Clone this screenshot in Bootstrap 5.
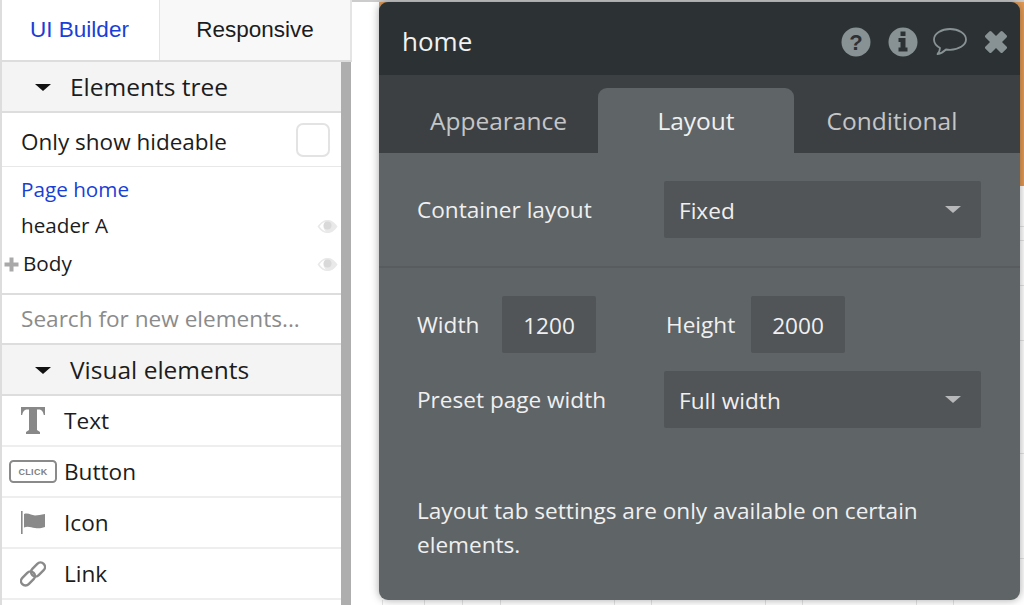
<!DOCTYPE html>
<html lang="en">
<head>
    <meta charset="UTF-8">
    <meta name="viewport" content="width=device-width, initial-scale=1.0">
    <title>Page editor - Layout</title>
    <link href="https://cdn.jsdelivr.net/npm/bootstrap@5.3.0/dist/css/bootstrap.min.css" rel="stylesheet">
    <style>
        html, body { height: 605px; overflow: hidden; }
        body { background: #fff; font-family: "Open Sans", sans-serif; color: #1c1c1c; }

        .shell { height: 605px; }
        .side { width: 352px; flex: none; border-left: 2px solid #ddd; background: #fff; }
        .side-tabs { height: 62px; border-bottom: 2px solid #ddd; font-family: "Liberation Sans", sans-serif; font-size: 22.5px; }
        .side-tab { height: 60px; }
        .side-tab-on { width: 157px; color: #1a3fd6; padding-right: 2px; }
        .side-tab-off { width: 193px; background: #f8f8f8; border-left: 1px solid #e4e4e4; border-right: 2px solid #e4e4e4; }
        .side-body { height: 543px; }
        .side-list { width: 339px; flex: none; }
        .side-scroll { width: 10px; flex: none; background: #aeaeae; }
        .sec-head { height: 51px; background: #f4f4f4; border-bottom: 2px solid #ddd; font-size: 24.5px; padding: 1px 0 0 33px; gap: 19px; }
        .sec-head .caret-down { width: 0; height: 0; border-left: 8px solid transparent; border-right: 8px solid transparent; border-top: 7px solid #111; }
        .row-hide { height: 54px; border-bottom: 1px solid #e8e8e8; padding: 4px 11px 0 19px; font-size: 22.5px; }
        .check-box { width: 34px; height: 34px; margin-top: -4px; border: 2px solid #e3e3e3; border-radius: 7px; background: #fff; }
        .tree { height: 128px; padding-top: 4px; border-bottom: 2px solid #ddd; font-size: 20.7px; }
        .tree-row { height: 38px; padding-left: 19px; padding-right: 3px; }
        .tree-row-page { height: 38px; padding-left: 19px; color: #1a3fd6; margin-bottom: -2px; }
        .tree-row-body { padding-left: 2px; gap: 4px; }
        .search-row { height: 50px; border-bottom: 2px solid #ddd; padding-left: 19px; font-size: 22.6px; color: #8b8b8b; }
        .el-row { height: 51px; border-bottom: 2px solid #eee; font-size: 22.6px; }
        .el-icon { width: 62px; flex: none; }

        .canvas { flex: 1; position: relative; background: #fff; }
        .canvas-top { height: 2px; background: #ccc; }
        .orange { position: absolute; left: 27px; right: 0; top: 2px; height: 184px; background: #e19a55; }
        .grid-lines { position: absolute; left: 0; top: 0; }

        .panel { position: absolute; left: 27px; top: 2px; width: 641px; height: 598px; background: #5f6467; border-radius: 9px; overflow: hidden; box-shadow: 0 0 9px rgba(0,0,0,.35); color: #f0f0f0; font-size: 22.6px; }
        .panel-head { height: 73px; background: #2c3234; padding: 6px 12px 0 23px; font-size: 26px; color: #f2f2f2; }
        .head-icons svg + svg { margin-left: 17px; }
        .head-icons .bubble { margin-left: 15px; }
        .panel-tabs { height: 78px; background: #3c4043; color: #c4c6c7; font-size: 24.5px; padding-left: 20px; }
        .p-tab { height: 65px; width: 196px; margin-top: 13px; padding-top: 2px; }
        .p-tab-on { background: #5f6467; color: #f0f0f0; border-radius: 9px 9px 0 0; }
        .p-tab-left { width: 199px; }
        .panel-row1 { height: 115px; border-bottom: 2px solid #585c5f; padding: 0 0 1px 38px; }
        .field-label { width: 247px; flex: none; }
        .label-low { padding-top: 2px; }
        .drop { width: 317px; height: 57px; background: #515558; border-radius: 2px; padding: 3px 20px 0 15px; }
        .drop-caret { width: 0; height: 0; margin-top: -3px; border-left: 8px solid transparent; border-right: 8px solid transparent; border-top: 7px solid #b6b8b9; }
        .panel-body { padding: 28px 0 0 38px; }
        .size-box { width: 94px; height: 57px; padding-top: 2px; background: #515558; border-radius: 2px; }
        .note { margin: 0; padding: 66px 80px 0 38px; line-height: 34px; }
    </style>
</head>
<body>
    <div class="shell d-flex">
        <div class="side">
            <div class="side-tabs d-flex">
                <div class="side-tab side-tab-on d-flex align-items-center justify-content-center">UI Builder</div>
                <div class="side-tab side-tab-off d-flex align-items-center justify-content-center">Responsive</div>
            </div>
            <div class="side-body d-flex">
                <div class="side-list">
                    <div class="sec-head d-flex align-items-center"><span class="caret-down"></span><span>Elements tree</span></div>
                    <div class="row-hide d-flex align-items-center justify-content-between">
                        <span>Only show hideable</span>
                        <span class="check-box"></span>
                    </div>
                    <div class="tree">
                        <div class="tree-row-page d-flex align-items-center">Page home</div>
                        <div class="tree-row d-flex align-items-center justify-content-between">
                            <span>header A</span>
                            <svg width="21" height="15" viewBox="0 0 21 15"><path d="M.5 7.500C4 2.500 7 1 10.500 1s6.500 1.500 10 6.500c-3.500 5-6.500 6.500-10 6.500S4 12.500.5 7.500z" fill="#e9e9e9"/><circle cx="10.500" cy="6.500" r="4" fill="#d9d9d9"/><path d="M2.500 7.500C5 4 7 3 8 3 6.500 4.500 6 6 6.500 8.500 7 10.500 8 11.500 9 12.500 6.500 12 4.500 10 2.500 7.500z" fill="#fff"/></svg>
                        </div>
                        <div class="tree-row tree-row-body d-flex align-items-center">
                            <svg width="15" height="15" viewBox="0 0 15 15"><path d="M5.500.5h4v5h5v4h-5v5h-4v-5h-5v-4h5z" fill="#a9a9a9"/></svg>
                            <span>Body</span>
                            <svg class="ms-auto" width="21" height="15" viewBox="0 0 21 15"><path d="M.5 7.500C4 2.500 7 1 10.500 1s6.500 1.500 10 6.500c-3.500 5-6.500 6.500-10 6.500S4 12.500.5 7.500z" fill="#e9e9e9"/><circle cx="10.500" cy="6.500" r="4" fill="#d9d9d9"/><path d="M2.500 7.500C5 4 7 3 8 3 6.500 4.500 6 6 6.500 8.500 7 10.500 8 11.500 9 12.500 6.500 12 4.500 10 2.500 7.500z" fill="#fff"/></svg>
                        </div>
                    </div>
                    <div class="search-row d-flex align-items-center">Search for new elements...</div>
                    <div class="sec-head d-flex align-items-center"><span class="caret-down"></span><span>Visual elements</span></div>
                    <div class="el-row d-flex align-items-center">
                        <div class="el-icon d-flex justify-content-center">
                            <svg width="24" height="27" viewBox="0 0 24 27"><path d="M0 0h24v8h-1.200c-.6-3-1.800-5.500-5-5.500h-1.800V23l3 2v2H5v-2l3-2V2.500H6.200c-3.200 0-4.400 2.500-5 5.500H0z" fill="#888"/></svg>
                        </div>
                        <span>Text</span>
                    </div>
                    <div class="el-row d-flex align-items-center">
                        <div class="el-icon d-flex justify-content-center">
                            <svg width="48" height="23" viewBox="0 0 48 23"><rect x="1" y="1" width="46" height="21" rx="3.500" fill="#fff" stroke="#8a8a8a" stroke-width="2"/><text x="24" y="15" text-anchor="middle" font-family="Liberation Sans" font-weight="700" font-size="9" letter-spacing=".3" fill="#808080">CLICK</text></svg>
                        </div>
                        <span>Button</span>
                    </div>
                    <div class="el-row d-flex align-items-center">
                        <div class="el-icon d-flex justify-content-center">
                            <svg width="26" height="23" viewBox="0 0 26 23"><rect x="1" y="0" width="1.600" height="23" fill="#8a8a8a"/><path d="M4 3c5-1.500 7 1.500 11 1.500 3 0 6-1 10-1.500v13c-4 1.500-7 1.500-10 1-4-.5-7-2.500-11-.5z" fill="#8a8a8a"/></svg>
                        </div>
                        <span>Icon</span>
                    </div>
                    <div class="el-row d-flex align-items-center">
                        <div class="el-icon d-flex justify-content-center">
                            <svg width="26" height="26" viewBox="0 0 26 26" fill="none" stroke="#8a8a8a" stroke-width="2.400"><rect x="0" y="13" width="16" height="9" rx="4.500" transform="rotate(-45 8 17.500)"/><rect x="10" y="4" width="16" height="9" rx="4.500" transform="rotate(-45 18 8.500)"/></svg>
                        </div>
                        <span>Link</span>
                    </div>
                </div>
                <div class="side-scroll"></div>
            </div>
        </div>

        <div class="canvas">
            <div class="canvas-top"></div>
            <div class="orange"></div>
            <svg class="grid-lines" width="672" height="605" stroke="#e4e4e4" stroke-width="1">
                <path d="M668 226.500h4M668 240.500h4M668 285.500h4M668 340.500h4M668 453.500h4M668 558.500h4"/>
                <path d="M30.500 600v5M72.500 600v5M110.500 600v5M148.500 600v5M262.500 600v5M299.500 600v5M413.500 600v5M450.500 600v5M564.500 600v5M601.500 600v5"/>
            </svg>
            <div class="panel">
                <div class="panel-head d-flex align-items-center justify-content-between">
                    <span>home</span>
                    <div class="head-icons d-flex align-items-center">
                        <svg width="30" height="30" viewBox="0 0 30 30"><circle cx="15" cy="15" r="14.500" fill="#889295"/><text x="15" y="23" text-anchor="middle" font-family="Liberation Sans" font-weight="700" font-size="22" fill="#2c3234">?</text></svg>
                        <svg width="30" height="30" viewBox="0 0 30 30"><circle cx="15" cy="15" r="14.500" fill="#889295"/><path d="M12.500 4.500h5v4.500h-5zM10.500 11h7v9.500h2v4h-9v-4h2v-5.500h-2z" fill="#2c3234"/></svg>
                        <svg class="bubble" width="34" height="30" viewBox="0 0 34 30"><path d="M17 2C8.500 2 1 6.500 1 12.500c0 3.500 2.500 6.500 6 8.500 0 2.500-.8 4-2.500 6 3.500-.5 6-2 8.500-4.500 1.300.2 2.700.3 4 .3 8.500 0 16-4.500 16-10.300C33 6.500 25.500 2 17 2z" fill="none" stroke="#889295" stroke-width="1.800" stroke-linejoin="round"/></svg>
                        <svg width="24" height="24" viewBox="0 0 24 24"><path d="M7.500 1.500 12 6l4.500-4.500c.7-.7 1.500-.7 2.200 0l3.800 3.800c.7.7.7 1.500 0 2.200L18 12l4.500 4.500c.7.700.7 1.500 0 2.200l-3.800 3.800c-.7.700-1.500.7-2.200 0L12 18l-4.500 4.500c-.7.700-1.500.7-2.200 0l-3.800-3.800c-.7-.7-.7-1.500 0-2.200L6 12 1.500 7.500c-.7-.7-.7-1.500 0-2.200l3.800-3.800c.7-.7 1.500-.7 2.200 0z" fill="#889295"/></svg>
                    </div>
                </div>
                <div class="panel-tabs d-flex">
                    <div class="p-tab p-tab-left d-flex align-items-center justify-content-center">Appearance</div>
                    <div class="p-tab p-tab-on d-flex align-items-center justify-content-center">Layout</div>
                    <div class="p-tab d-flex align-items-center justify-content-center">Conditional</div>
                </div>
                <div class="panel-row1 d-flex align-items-center">
                    <span class="field-label label-low">Container layout</span>
                    <div class="drop d-flex align-items-center justify-content-between"><span>Fixed</span><span class="drop-caret"></span></div>
                </div>
                <div class="panel-body">
                    <div class="d-flex align-items-center">
                        <span style="width:85px">Width</span>
                        <div class="size-box d-flex align-items-center justify-content-center">1200</div>
                        <span style="width:85px;margin-left:70px">Height</span>
                        <div class="size-box d-flex align-items-center justify-content-center">2000</div>
                    </div>
                    <div class="d-flex align-items-center" style="margin-top:18px">
                        <span class="field-label">Preset page width</span>
                        <div class="drop d-flex align-items-center justify-content-between"><span>Full width</span><span class="drop-caret"></span></div>
                    </div>
                </div>
                <p class="note">Layout tab settings are only available on certain elements.</p>
            </div>
        </div>
    </div>
    <script src="https://cdn.jsdelivr.net/npm/bootstrap@5.3.0/dist/js/bootstrap.bundle.min.js"></script>
</body>
</html>
